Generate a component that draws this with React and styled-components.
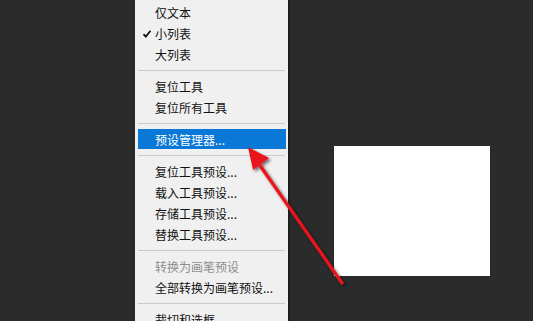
import React from "react";
import styled, { createGlobalStyle } from "styled-components";

const Global = createGlobalStyle`
  html, body { margin: 0; padding: 0; background: #2b2b2b; }
  body { width: 533px; height: 321px; overflow: hidden; }
  #root { width: 533px; height: 321px; }
`;

const Stage = styled.div`
  position: relative;
  width: 533px;
  height: 321px;
  background: #2b2b2b;
  display: flex;
  align-items: flex-start;
  overflow: hidden;
  font-family: "Noto Sans CJK SC", "Microsoft YaHei", sans-serif;
`;

const Menu = styled.div`
  margin-left: 135px;
  width: 153px;
  height: 321px;
  background: #f0f0f0;
  border-right: 2px solid #1e1e1e;
  padding-top: 2px;
  box-sizing: content-box;
  display: flex;
  flex-direction: column;
`;

const Item = styled.div`
  position: relative;
  height: 21px;
  flex: none;
  display: flex;
  align-items: center;
  padding-left: 17px;
  margin: 0 2px 0 3px;
  font-size: 12px;
  line-height: 1;
  color: ${(p) => (p.$disabled ? "#8d8d8d" : p.$active ? "#ffffff" : "#111111")};
  background: ${(p) => (p.$active ? "#0a78d7" : "transparent")};
  box-shadow: ${(p) => (p.$active ? "inset 0 -1px 0 #f0f0f0" : "none")};
  white-space: nowrap;
`;

const Check = styled.svg`
  position: absolute;
  left: 5px;
  top: 7px;
`;

const Sep = styled.div`
  height: 11px;
  flex: none;
  display: flex;
  align-items: flex-start;
  padding-top: 5px;
  box-sizing: border-box;
  margin: 0 3px;
  &::before {
    content: "";
    display: block;
    width: 100%;
    height: 1px;
    background: #cbcbcb;
  }
`;

const Canvas = styled.div`
  margin-left: 44px;
  margin-top: 146px;
  width: 156px;
  height: 130px;
  background: #ffffff;
  flex: none;
`;

const Arrow = styled.svg`
  position: absolute;
  left: 0;
  top: 0;
  pointer-events: none;
`;

const entries = [
  { t: "仅文本" },
  { t: "小列表", check: true },
  { t: "大列表" },
  { sep: true },
  { t: "复位工具" },
  { t: "复位所有工具" },
  { sep: true },
  { t: "预设管理器...", active: true },
  { sep: true },
  { t: "复位工具预设..." },
  { t: "载入工具预设..." },
  { t: "存储工具预设..." },
  { t: "替换工具预设..." },
  { sep: true },
  { t: "转换为画笔预设", disabled: true },
  { t: "全部转换为画笔预设..." },
  { sep: true },
  { t: "裁切和选框" },
];

export default function App() {
  return (
    <>
      <Global />
      <Stage>
        <Menu>
          {entries.map((e, i) =>
            e.sep ? (
              <Sep key={i} />
            ) : (
              <Item key={i} $active={e.active} $disabled={e.disabled}>
                {e.check && (
                  <Check width="8" height="8" viewBox="0 0 8 8">
                    <path d="M0.5 4.2 L2.8 6.6 L7.5 0.8" fill="none" stroke="#111" strokeWidth="1.7" />
                  </Check>
                )}
                {e.t}
              </Item>
            )
          )}
        </Menu>
        <Canvas />
        <Arrow width="533" height="321" viewBox="0 0 533 321">
          <defs>
            <filter id="sh" x="-20%" y="-20%" width="140%" height="140%">
              <feDropShadow dx="2" dy="2" stdDeviation="1.5" floodColor="#000" floodOpacity="0.55" />
            </filter>
          </defs>
          <g filter="url(#sh)">
            <line x1="342" y1="283" x2="259" y2="164" stroke="#e8141a" strokeWidth="3.2" strokeLinecap="round" />
            <polygon points="248,147 269,158 253,170" fill="#e8141a" />
          </g>
        </Arrow>
      </Stage>
    </>
  );
}
